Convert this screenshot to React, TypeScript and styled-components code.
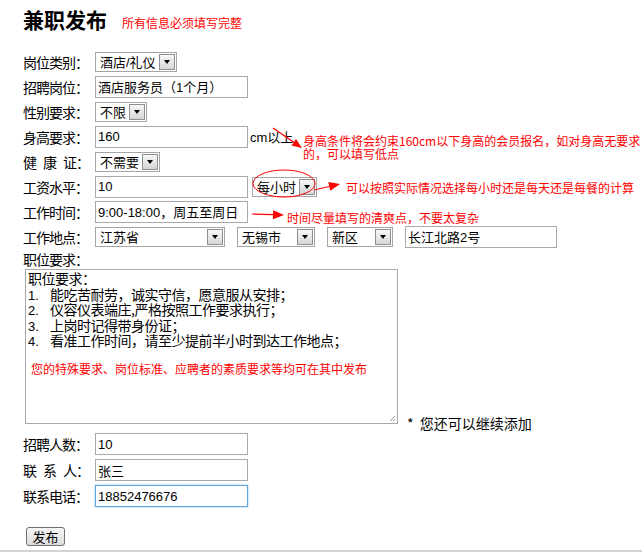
import React from "react";
import styled, { createGlobalStyle } from "styled-components";

const CJK = `"Noto Sans CJK SC", sans-serif`;
const FIELD = `"Liberation Sans", "Noto Sans CJK SC", sans-serif`;

const GlobalStyle = createGlobalStyle`
  html, body {
    margin: 0;
    padding: 0;
    background: #fff;
  }
  body {
    font-family: ${CJK};
    color: #000;
  }
`;

// 红色标注箭头：线 + 实心箭头
const Arrow: React.FC<{ x1: number; y1: number; x2: number; y2: number; len?: number; half?: number }> = ({
	x1, y1, x2, y2, len = 10, half = 4
}) => {
	const dx = x2 - x1;
	const dy = y2 - y1;
	const d = Math.hypot(dx, dy);
	const ux = dx / d;
	const uy = dy / d;
	const bx = x2 - ux * len;
	const by = y2 - uy * len;
	const pts = `${x2},${y2} ${bx - uy * half},${by + ux * half} ${bx + uy * half},${by - ux * half}`;
	return (
		<g>
			<line x1={x1} y1={y1} x2={bx} y2={by} stroke="#f00" strokeWidth={1.2} />
			<polygon points={pts} fill="#f00" />
		</g>
	);
};

const DropDown: React.FC<{ w: number; value: string }> = ({ w, value }) => (
	<Select $w={w}>
		<span>{value}</span>
		<DropButton>
			<Caret />
		</DropButton>
	</Select>
);

export default function App() {
	return (
		<Page>
			<GlobalStyle />
			<Content>
				<Header>
					<Title>兼职发布</Title>
					<Required>所有信息必须填写完整</Required>
				</Header>

				<Form>
					<Row>
						<Label>岗位类别：</Label>
						<DropDown w={82} value="酒店/礼仪" />
					</Row>
					<Row>
						<Label>招聘岗位：</Label>
						<Input defaultValue="酒店服务员（1个月）" />
					</Row>
					<Row>
						<Label>性别要求：</Label>
						<DropDown w={52} value="不限" />
					</Row>
					<Row>
						<Label>身高要求：</Label>
						<Input defaultValue="160" />
						<Unit>cm以上</Unit>
					</Row>
					<Row>
						<Label><Spread>健康</Spread>证：</Label>
						<DropDown w={65} value="不需要" />
					</Row>
					<Row>
						<Label>工资水平：</Label>
						<Input defaultValue="10" />
						<Pair>
							<DropDown w={65} value="每小时" />
						</Pair>
					</Row>
					<Row>
						<Label>工作时间：</Label>
						<Input defaultValue="9:00-18:00，周五至周日" />
					</Row>
					<Row>
						<Label>工作地点：</Label>
						<Group>
							<DropDown w={130} value="江苏省" />
							<DropDown w={78} value="无锡市" />
							<DropDown w={66} value="新区" />
							<Input defaultValue="长江北路2号" $w={152} />
						</Group>
					</Row>
					<Row $h={20}>
						<Label>职位要求：</Label>
					</Row>
					<AreaRow>
						<TextBox>
							<AreaLine>职位要求：</AreaLine>
							<AreaLine><Num>1.</Num>能吃苦耐劳，诚实守信，愿意服从安排；</AreaLine>
							<AreaLine><Num>2.</Num>仪容仪表端庄,严格按照工作要求执行；</AreaLine>
							<AreaLine><Num>3.</Num>上岗时记得带身份证；</AreaLine>
							<AreaLine><Num>4.</Num>看准工作时间，请至少提前半小时到达工作地点；</AreaLine>
							<RedLine>您的特殊要求、岗位标准、应聘者的素质要求等均可在其中发布</RedLine>
							<Grip viewBox="0 0 8 8">
								<line x1="7" y1="2" x2="2" y2="7" stroke="#9a9a9a" />
								<line x1="7" y1="5" x2="5" y2="7" stroke="#9a9a9a" />
							</Grip>
						</TextBox>
						<MoreHint>*&nbsp;&nbsp;您还可以继续添加</MoreHint>
					</AreaRow>
					<Row $h={26}>
						<Label>招聘人数：</Label>
						<Input defaultValue="10" />
					</Row>
					<Row $h={26}>
						<Label><Spread>联系</Spread>人：</Label>
						<Input defaultValue="张三" />
					</Row>
					<Row $h={26}>
						<Label>联系电话：</Label>
						<Input defaultValue="18852476676" $focus />
					</Row>
				</Form>

				<Submit type="button">发布</Submit>
			</Content>
			<Rule />

			<Marks viewBox="0 0 642 553">
				<Arrow x1={273} y1={128} x2={302} y2={148} />
				<ellipse cx={284} cy={183.5} rx={31} ry={13.5} fill="none" stroke="#f00" strokeWidth={1} />
				<Arrow x1={314} y1={190} x2={340} y2={184} len={11} half={4.5} />
				<Arrow x1={252} y1={214} x2={284} y2={215} len={11} half={4.5} />
			</Marks>
			<Note $top={134} $left={303}>
				<div>身高条件将会约束160cm以下身高的会员报名，如对身高无要求</div>
				<div>的，可以填写低点</div>
			</Note>
			<Note $top={181} $left={346}>可以按照实际情况选择每小时还是每天还是每餐的计算</Note>
			<Note $top={211} $left={287}>时间尽量填写的清爽点，不要太复杂</Note>
		</Page>
	);
}

const Page = styled.div`
	position: relative;
	width: 642px;
	height: 553px;
	overflow: hidden;
	background: #fff;
`;

const Content = styled.div`
	padding: 7px 0 0 23px;
`;

const Header = styled.div`
	display: flex;
	align-items: baseline;
	gap: 15px;
	height: 24px;
`;

const Title = styled.h1`
	margin: 0;
	font-family: ${CJK};
	font-size: 21px;
	font-weight: 700;
	line-height: 24px;
`;

const Required = styled.span`
	font-size: 12px;
	color: #f00;
`;

const Form = styled.div`
	margin-top: 18px;
	display: flex;
	flex-direction: column;
`;

const Row = styled.div<{ $h?: number }>`
	display: flex;
	align-items: center;
	height: ${({ $h }) => $h ?? 25}px;
`;

const Label = styled.span`
	width: 72px;
	flex-shrink: 0;
	font-size: 14px;
	letter-spacing: -1px;
	white-space: nowrap;
`;

const Spread = styled.span`
	letter-spacing: 6px;
`;

const Input = styled.input<{ $w?: number; $focus?: boolean }>`
	box-sizing: border-box;
	width: ${({ $w }) => $w ?? 153}px;
	height: 22px;
	margin: 0;
	padding: 0 2px;
	border: 1px solid ${({ $focus }) => ($focus ? "#5ea6df" : "#a9a9a9")};
	box-shadow: ${({ $focus }) => ($focus ? "0 0 2px #8cc4f0" : "none")};
	border-radius: 0;
	font-family: ${FIELD};
	font-size: 13px;
	color: #000;
	background: #fff;
	outline: none;
`;

const Select = styled.div<{ $w: number }>`
	box-sizing: border-box;
	display: inline-flex;
	align-items: center;
	justify-content: space-between;
	width: ${({ $w }) => $w}px;
	height: 20px;
	padding-left: 4px;
	border: 1px solid #a5a5a5;
	background: #fff;
	font-family: ${FIELD};
	font-size: 13px;
	white-space: nowrap;
`;

const DropButton = styled.span`
	box-sizing: border-box;
	display: flex;
	align-items: center;
	justify-content: center;
	width: 16px;
	height: 16px;
	margin-right: 1px;
	border: 1px solid #8f8f8f;
	background: linear-gradient(#f7f7f7, #d6d6d6);
`;

const Caret = styled.span`
	width: 0;
	height: 0;
	border-left: 3.5px solid transparent;
	border-right: 3.5px solid transparent;
	border-top: 4px solid #000;
`;

const Unit = styled.span`
	margin-left: 2px;
	font-family: ${FIELD};
	font-size: 13px;
`;

const Pair = styled.span`
	margin-left: 4px;
	display: flex;
`;

const Group = styled.div`
	display: flex;
	align-items: center;
	gap: 12px;
`;

const AreaRow = styled.div`
	display: flex;
	align-items: flex-end;
	margin-left: 2px;
`;

const TextBox = styled.div`
	position: relative;
	box-sizing: border-box;
	width: 373px;
	height: 155px;
	margin-bottom: 7px;
	padding: 1px 2px;
	border: 1px solid #a9a9a9;
	font-size: 14px;
	letter-spacing: -0.5px;
	white-space: nowrap;
`;

const AreaLine = styled.div`
	height: 15.5px;
	line-height: 15.5px;
`;

const Num = styled.span`
	display: inline-block;
	width: 22px;
	font-family: ${FIELD};
	font-size: 13px;
	letter-spacing: 0;
`;

const RedLine = styled.div`
	margin: 12px 0 0 3px;
	font-size: 12px;
	letter-spacing: 0;
	line-height: 15px;
	color: #f00;
`;

const Grip = styled.svg`
	position: absolute;
	right: 1px;
	bottom: 1px;
	width: 8px;
	height: 8px;
`;

const MoreHint = styled.span`
	margin-left: 9px;
	font-size: 14px;
	line-height: 16px;
	white-space: nowrap;
`;

const Submit = styled.button`
	display: block;
	box-sizing: border-box;
	width: 39px;
	height: 19px;
	margin: 18px 0 0 3px;
	padding: 0;
	border: 1px solid #707070;
	border-radius: 3px;
	background: linear-gradient(#f6f6f6, #dcdcdc);
	font-family: ${CJK};
	font-size: 13px;
	line-height: 15px;
	color: #000;
`;

const Rule = styled.div`
	height: 2px;
	margin-top: 4px;
	background: #d3d3d3;
`;

const Marks = styled.svg`
	position: absolute;
	top: 0;
	left: 0;
	width: 642px;
	height: 553px;
	pointer-events: none;
`;

const Note = styled.div<{ $top: number; $left: number }>`
	position: absolute;
	top: ${({ $top }) => $top}px;
	left: ${({ $left }) => $left}px;
	font-size: 12px;
	line-height: 13px;
	color: #f00;
	white-space: nowrap;
`;
